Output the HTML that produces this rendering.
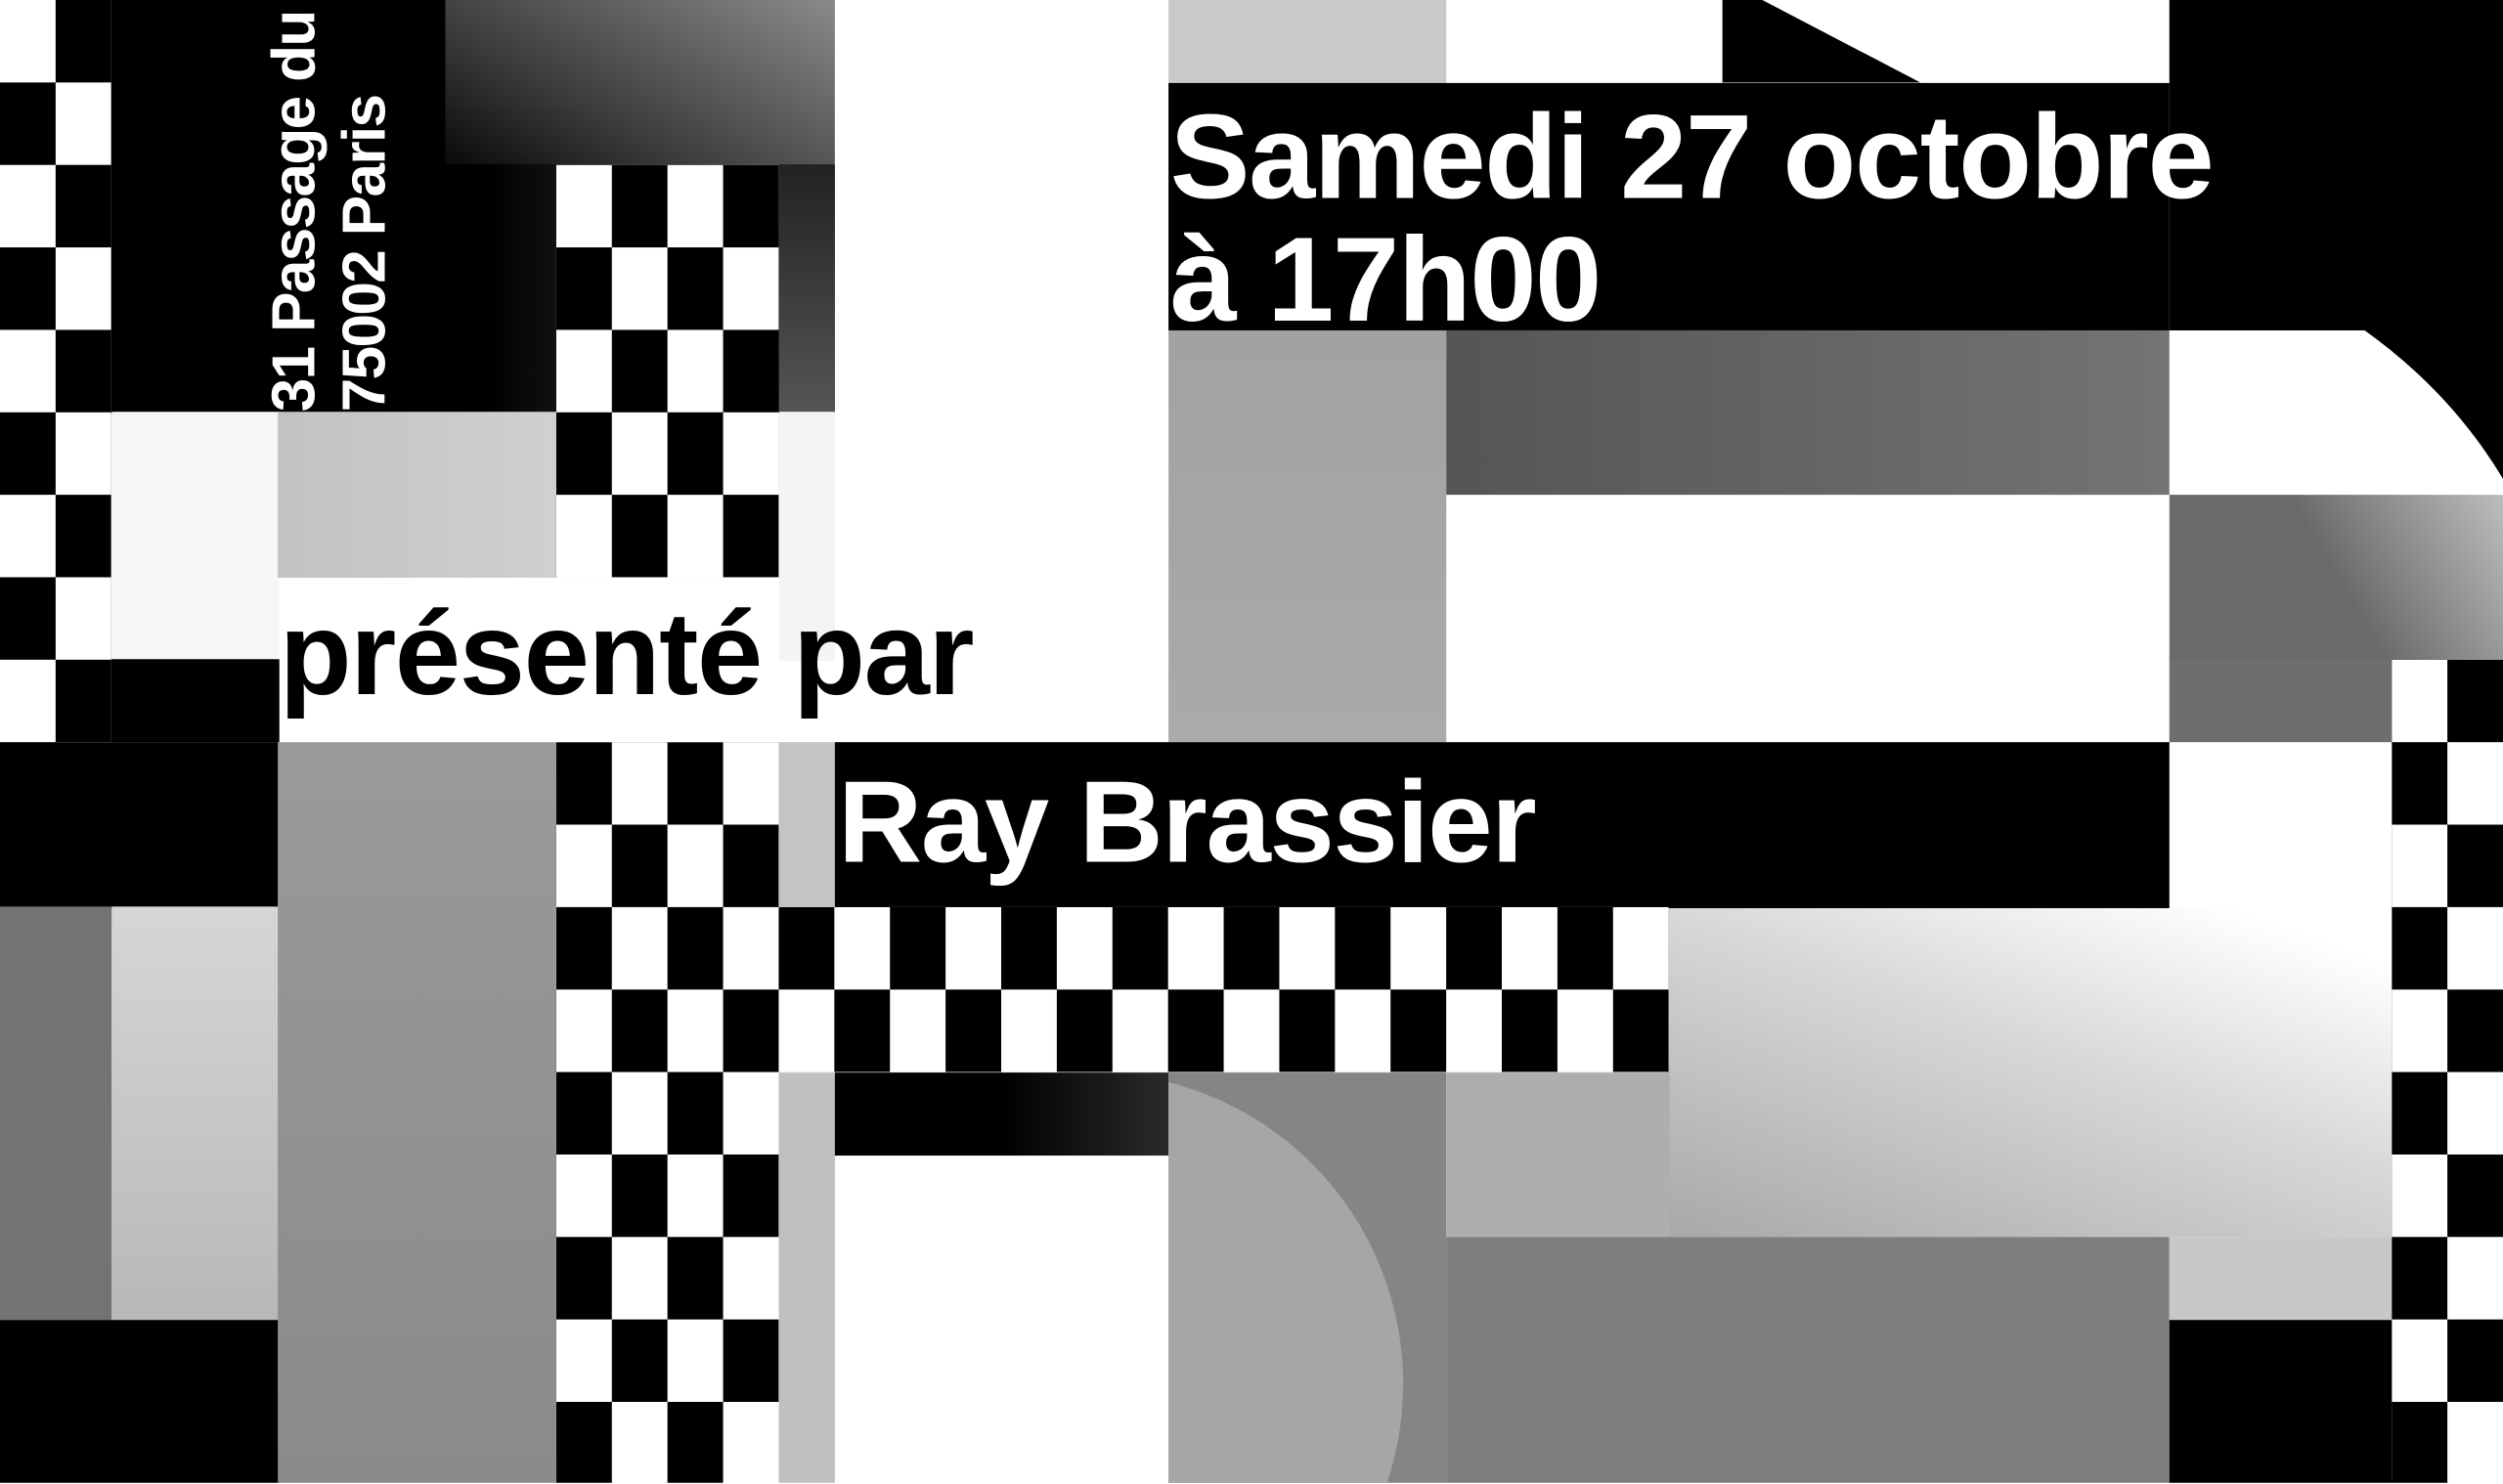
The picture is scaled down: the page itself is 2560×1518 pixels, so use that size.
<!DOCTYPE html>
<html><head><meta charset="utf-8"><style>
html,body{margin:0;padding:0;background:#fff;overflow:hidden;width:2560px;height:1518px}
#p{position:absolute;left:0;top:0;width:1568px;height:929px;transform:scale(1.632653);transform-origin:0 0;overflow:hidden;background:#fff}
.b{position:absolute;left:calc(var(--x)*34.8444px);top:calc(var(--y)*51.6667px);width:calc(var(--w)*34.8444px + 0.4px);height:calc(var(--h)*51.6667px + 0.4px)}
.k{background:#000}
.t{position:absolute;font-family:"Liberation Sans",Arial,sans-serif;font-weight:bold;white-space:nowrap}
</style></head><body><div id="p">
<div class="b" style="--x:8;--y:0;--w:7;--h:5;background:linear-gradient(30deg,#000 35%,#3a3a3a 60%,#8a8a8a 100%)"></div>
<div class="b k" style="--x:1;--y:0;--w:7;--h:5"></div>
<div class="b" style="--x:8;--y:2;--w:2;--h:3;background:linear-gradient(90deg,#000 40%,#111)"></div>
<div class="b" style="--x:14;--y:2;--w:1;--h:3;background:linear-gradient(180deg,#222,#555)"></div>
<div class="b" style="--x:2;--y:5;--w:3;--h:3;background:#f6f6f6"></div>
<div class="b" style="--x:5;--y:5;--w:5;--h:2;background:linear-gradient(90deg,#c2c2c2,#d0d0d0)"></div>
<div class="b" style="--x:14;--y:5;--w:1;--h:3;background:#f4f4f4"></div>
<div class="b k" style="--x:1;--y:8;--w:4;--h:1"></div>
<div class="b k" style="--x:0;--y:9;--w:5;--h:2"></div>
<div class="b" style="--x:0;--y:11;--w:2;--h:5;background:#737373"></div>
<div class="b" style="--x:2;--y:11;--w:3;--h:5;background:linear-gradient(180deg,#d6d6d6,#b8b8b8)"></div>
<div class="b k" style="--x:0;--y:16;--w:5;--h:2"></div>
<div class="b" style="--x:5;--y:9;--w:5;--h:9;background:linear-gradient(180deg,#9a9a9a,#8a8a8a)"></div>
<div class="b" style="--x:14;--y:9;--w:1;--h:2;background:#c4c4c4"></div>
<div class="b" style="--x:14;--y:13;--w:1;--h:5;background:#c0c0c0"></div>
<div class="b" style="--x:15;--y:13;--w:6;--h:1;background:linear-gradient(90deg,#000 50%,#2a2a2a)"></div>
<div class="b" style="--x:21;--y:0;--w:5;--h:1;background:#c9c9c9"></div>
<div class="b" style="--x:21;--y:4;--w:5;--h:5;background:linear-gradient(180deg,#a2a2a2,#aaaaaa)"></div>
<div class="b" style="--x:21;--y:13;--w:5;--h:5;background:#858585;overflow:hidden">
 <div style="position:absolute;left:-243px;top:0;width:390px;height:390px;border-radius:50%;background:#a6a6a6"></div>
</div>
<div class="b" style="--x:26;--y:4;--w:13;--h:2;background:linear-gradient(90deg,#555,#747474)"></div>
<div class="b" style="--x:39;--y:6;--w:6;--h:2;background:linear-gradient(60deg,#6a6a6a 50%,#bdbdbd)"></div>
<div class="b" style="--x:39;--y:8;--w:4;--h:1;background:#6e6e6e"></div>
<div class="b" style="--x:30;--y:11;--w:13;--h:4;background:linear-gradient(200deg,#fff 10%,#d8d8d8 45%,#a8a8a8 100%)"></div>
<div class="b" style="--x:26;--y:13;--w:4;--h:2;background:#aeaeae"></div>
<div class="b" style="--x:26;--y:15;--w:13;--h:3;background:#7e7e7e"></div>
<div class="b" style="--x:39;--y:15;--w:4;--h:1;background:#c8c8c8"></div>
<div class="b k" style="--x:39;--y:16;--w:4;--h:2"></div>
<div class="b k" style="--x:21;--y:1;--w:18;--h:3"></div>
<div class="b k" style="--x:39;--y:0;--w:6;--h:4"></div>
<div class="b k" style="--x:15;--y:9;--w:24;--h:2"></div>
<svg style="position:absolute;left:0;top:0" width="1568" height="930">
 <defs>
  <pattern id="c1" patternUnits="userSpaceOnUse" x="0" y="0" width="69.6888" height="103.3333">
   <rect width="69.6888" height="103.3333" fill="#fff"/>
   <rect x="34.8444" y="0" width="34.8444" height="51.6667" fill="#000"/>
   <rect x="0" y="51.6667" width="34.8444" height="51.6667" fill="#000"/>
  </pattern>
  <pattern id="c2" patternUnits="userSpaceOnUse" x="0" y="0" width="69.6888" height="103.3333">
   <rect width="69.6888" height="103.3333" fill="#000"/>
   <rect x="34.8444" y="0" width="34.8444" height="51.6667" fill="#fff"/>
   <rect x="0" y="51.6667" width="34.8444" height="51.6667" fill="#fff"/>
  </pattern>
 </defs>
 <rect x="0" y="0" width="69.69" height="465" fill="url(#c1)"/>
 <rect x="348.44" y="103.33" width="139.38" height="258.33" fill="url(#c1)"/>
 <rect x="348.44" y="465" width="139.38" height="465" fill="url(#c1)"/>
 <rect x="348.44" y="568.33" width="696.89" height="103.33" fill="url(#c1)"/>
 <rect x="1498.31" y="413.33" width="69.69" height="516.67" fill="url(#c2)"/>
 <polygon points="1079,0 1104,0 1203,51.7 1079,51.7" fill="#000"/>
 <path d="M1480,206 Q1535,245 1568,300 L1568,205 Z" fill="#000"/>
</svg>
<div class="t" style="left:163px;top:258px;transform:rotate(-90deg);transform-origin:0 0;color:#fff;font-size:38px;line-height:44px;letter-spacing:-1px">31 Passage du<br>75002 Paris</div>
<div class="t" style="left:733px;top:60px;color:#fff;font-size:75px;line-height:77px;letter-spacing:-0.8px">Samedi 27 octobre<br>à 17h00</div>
<div class="t" style="left:175px;top:373px;color:#000;font-size:74px;line-height:74px;letter-spacing:-0.8px">présenté par</div>
<div class="t" style="left:525px;top:479px;color:#fff;font-size:73px;line-height:73px;letter-spacing:-0.8px">Ray Brassier</div>
</div></body></html>
